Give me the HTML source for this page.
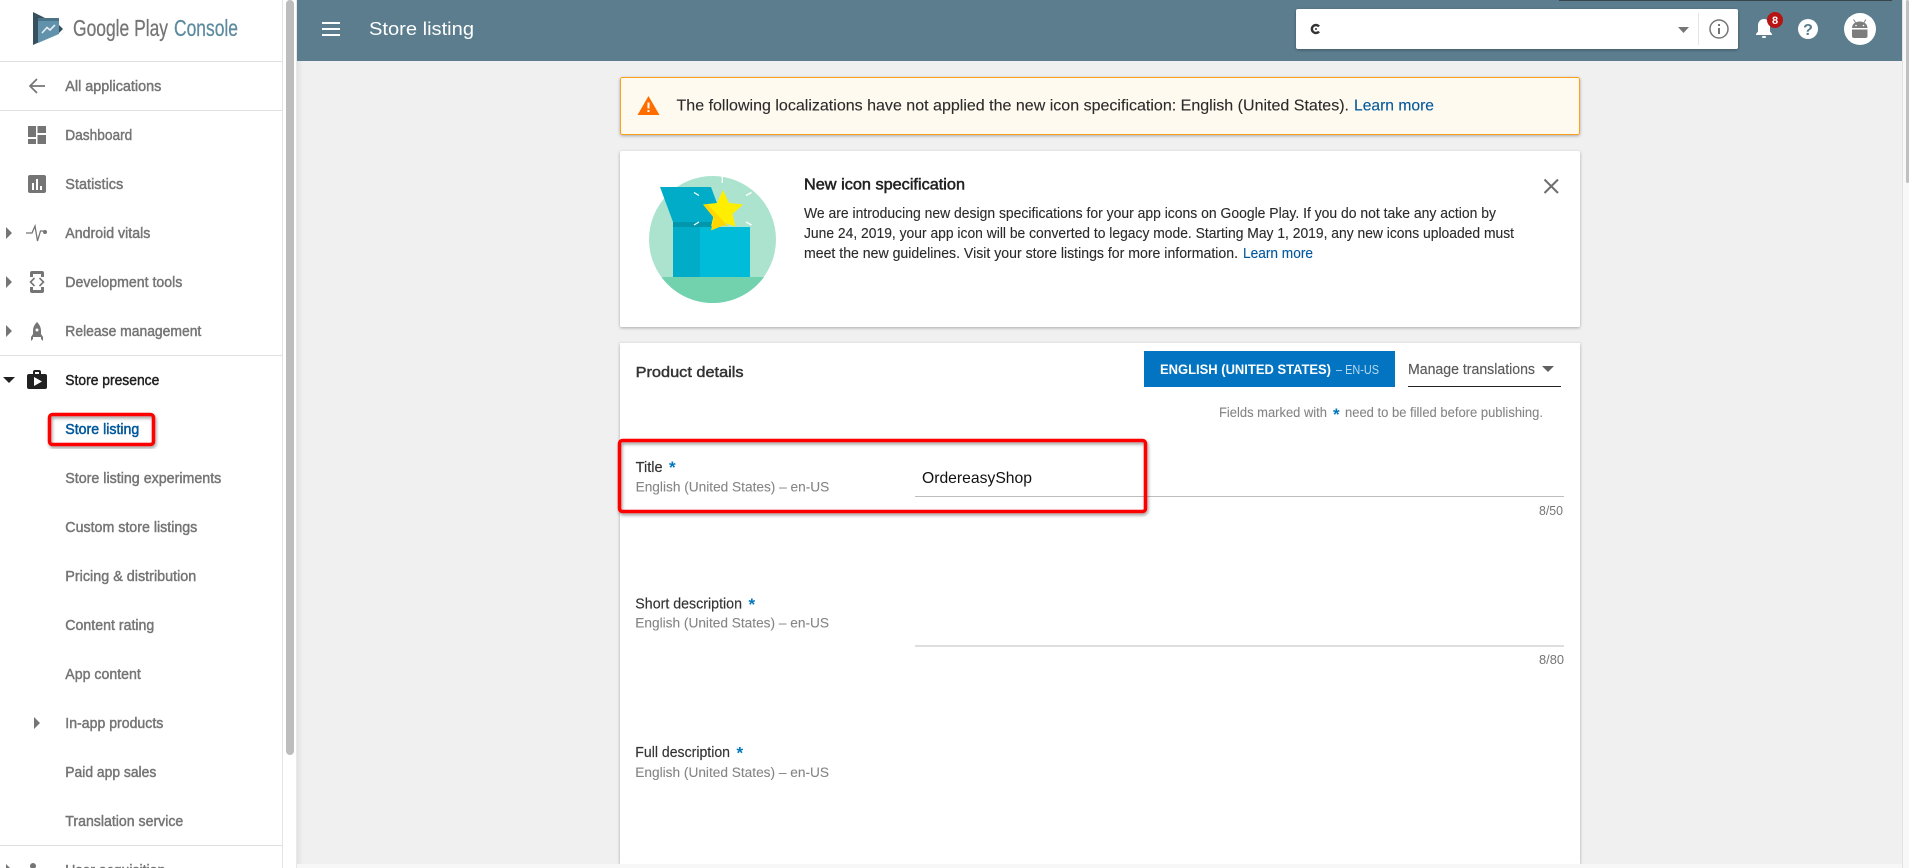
<!DOCTYPE html>
<html lang="en"><head><meta charset="utf-8"><title>Store listing</title>
<style>
html,body{margin:0;padding:0;width:1909px;height:868px;overflow:hidden;background:#f0f0f0}
svg{display:block;position:absolute;left:0;top:0}
text{font-family:"Liberation Sans",sans-serif;white-space:pre}
.n{font-size:14.6px;fill:#757575;stroke:#757575;stroke-width:.45}
.b{font-size:14.6px;fill:#212121;stroke:#212121;stroke-width:.45}
.t{font-size:14.6px;fill:#2b2b2b;stroke:#2b2b2b;stroke-width:.12}
.s{font-size:14.2px;fill:#858585;stroke:#858585;stroke-width:.1}
.l{fill:#01579b}
.i{fill:#757575}
</style></head><body>
<svg width="1909" height="868" viewBox="0 0 1909 868" xmlns="http://www.w3.org/2000/svg">
<defs>
<filter id="sh" x="-5%" y="-5%" width="110%" height="115%"><feDropShadow dx="0" dy="1" stdDeviation="1.500" flood-color="#000" flood-opacity=".3"/></filter>
<filter id="rs" x="-5%" y="-10%" width="110%" height="125%"><feDropShadow dx="1" dy="2" stdDeviation="1.500" flood-color="#000" flood-opacity=".4"/></filter>
<linearGradient id="edge" x1="0" x2="1" y1="0" y2="0"><stop offset="0" stop-color="#e2e2e2"/><stop offset="1" stop-color="#f0f0f0"/></linearGradient>
</defs>

<!-- page background -->
<rect x="297" y="0" width="1605" height="868" fill="#f0f0f0"/>
<rect x="297" y="61" width="6" height="807" fill="url(#edge)"/>

<!-- sidebar -->
<rect x="0" y="0" width="297" height="868" fill="#fff"/>
<rect x="282" y="0" width="1" height="868" fill="#e4e4e4"/>
<rect x="296" y="0" width="1" height="868" fill="#e8e8e8"/>
<rect x="286" y="0" width="8" height="755" rx="4" fill="#bdbdbd"/>
<rect x="0" y="61" width="282" height="1" fill="#e0e0e0"/>
<rect x="0" y="110" width="282" height="1" fill="#e0e0e0"/>
<rect x="0" y="355" width="282" height="1" fill="#e0e0e0"/>
<rect x="0" y="845" width="282" height="1" fill="#e0e0e0"/>

<!-- logo -->
<path d="M33 12 L59 25 L63 29 L59 33 L33 45 Z" fill="#37505e"/>
<path d="M38 18 H59 V34 L38 43 Z" fill="#6292ab"/>
<path d="M38 18 H59 V21 H38 Z" fill="#4c7489"/>
<path d="M42 33 L47 27.500 L50 30 L55 25" fill="none" stroke="#e4edf1" stroke-width="1.600"/>
<text x="73" y="36" font-size="23" fill="#757575" stroke="#757575" stroke-width=".25" textLength="95" lengthAdjust="spacingAndGlyphs">Google Play</text>
<text x="174" y="36" font-size="23" fill="#5c8a9f" stroke="#5c8a9f" stroke-width=".25" textLength="64" lengthAdjust="spacingAndGlyphs">Console</text>

<!-- sidebar text -->
<text class="n" x="65.300" y="91" textLength="96" lengthAdjust="spacingAndGlyphs">All applications</text>
<text class="n" x="65.300" y="140" textLength="67" lengthAdjust="spacingAndGlyphs">Dashboard</text>
<text class="n" x="65.300" y="189" textLength="58" lengthAdjust="spacingAndGlyphs">Statistics</text>
<text class="n" x="65.300" y="238" textLength="85" lengthAdjust="spacingAndGlyphs">Android vitals</text>
<text class="n" x="65.300" y="287" textLength="117" lengthAdjust="spacingAndGlyphs">Development tools</text>
<text class="n" x="65.300" y="336" textLength="136" lengthAdjust="spacingAndGlyphs">Release management</text>
<text class="b" x="65.300" y="385" textLength="94" lengthAdjust="spacingAndGlyphs">Store presence</text>
<text x="65.300" y="434" font-size="14.600" fill="#01579b" stroke="#01579b" stroke-width=".5" textLength="74" lengthAdjust="spacingAndGlyphs">Store listing</text>
<text class="n" x="65.300" y="483" textLength="156" lengthAdjust="spacingAndGlyphs">Store listing experiments</text>
<text class="n" x="65.300" y="532" textLength="132" lengthAdjust="spacingAndGlyphs">Custom store listings</text>
<text class="n" x="65.300" y="581" textLength="131" lengthAdjust="spacingAndGlyphs">Pricing &amp; distribution</text>
<text class="n" x="65.300" y="630" textLength="89" lengthAdjust="spacingAndGlyphs">Content rating</text>
<text class="n" x="65.300" y="679" textLength="75.500" lengthAdjust="spacingAndGlyphs">App content</text>
<text class="n" x="65.300" y="728" textLength="98" lengthAdjust="spacingAndGlyphs">In-app products</text>
<text class="n" x="65.300" y="777" textLength="91" lengthAdjust="spacingAndGlyphs">Paid app sales</text>
<text class="n" x="65.300" y="826" textLength="118" lengthAdjust="spacingAndGlyphs">Translation service</text>
<text class="n" x="65.300" y="875" textLength="100" lengthAdjust="spacingAndGlyphs">User acquisition</text>

<!-- sidebar icons -->
<path d="M45 86H30M37 79l-7 7 7 7" fill="none" stroke="#757575" stroke-width="1.700"/>
<path class="i" d="M28 126h8v11h-8zM37.500 126H46v7h-8.500zM28 139h8v5h-8zM37.500 135H46v9h-8.500z"/>
<rect class="i" x="28" y="175" width="18" height="18" rx="2"/>
<path d="M32 183h2v7h-2zM36 179h2v11h-2zM40 186h2v4h-2z" fill="#fff"/>
<path d="M26 233h6l3-7 2.500 15 3-10h3" fill="none" stroke="#757575" stroke-width="1.300"/>
<circle class="i" cx="45" cy="232" r="2"/>
<path d="M30 277v-4a2 2 0 0 1 2-2h10a2 2 0 0 1 2 2v4h-3v-3H33v3zM30 287v4a2 2 0 0 0 2 2h10a2 2 0 0 0 2-2v-4h-3v3H33v-3z" class="i"/>
<path d="M34.500 278l-4 4 4 4M39.500 278l4 4-4 4" fill="none" stroke="#757575" stroke-width="1.600"/>
<path class="i" d="M37 322c3 3 4 6 4 9v6h-8v-6c0-3 1-6 4-9zM33 334l-2 3v4l2-2zM41 334l2 3v4l-2-2z"/>
<circle cx="37" cy="330" r="1.500" fill="#fff"/>
<path d="M27 376a2 2 0 0 1 2-2h4v-2a2 2 0 0 1 2-2h4a2 2 0 0 1 2 2v2h4a2 2 0 0 1 2 2v11a2 2 0 0 1-2 2H29a2 2 0 0 1-2-2z" fill="#212121"/>
<path d="M35 372h4v2h-4z" fill="#fff"/>
<path d="M34 377l8 4.500-8 4.500z" fill="#fff"/>
<path class="i" d="M6 227l6 6-6 6zM6 276l6 6-6 6zM6 325l6 6-6 6zM34 717l6 6-6 6zM6 864l6 6-6 6z"/>
<path d="M3 377h12l-6 6z" fill="#212121"/>
<circle class="i" cx="33" cy="866" r="3"/>

<!-- red highlight around Store listing -->
<rect x="49.500" y="414.500" width="104" height="30" rx="3" fill="none" stroke="#f00" stroke-width="3.500" filter="url(#rs)"/>

<!-- header -->
<rect x="297" y="0" width="1605" height="61" fill="#5b7d8e"/>
<rect x="1559" y="0" width="333" height="1" fill="#38454c"/>
<path d="M322 22h18v2h-18zM322 28h18v2h-18zM322 34h18v2h-18z" fill="#fff"/>
<text x="369" y="35" font-size="18.500" fill="#fff" textLength="105" lengthAdjust="spacingAndGlyphs">Store listing</text>

<rect x="1296" y="9" width="442" height="40" rx="2" fill="#fff" filter="url(#sh)"/>
<path d="M1319 26.500a4 4 0 1 0 0 5" fill="none" stroke="#333" stroke-width="2.400"/>
<circle cx="1316" cy="29" r="1" fill="#333"/>
<path d="M1678 27h11l-5.500 6z" fill="#757575"/>
<rect x="1698" y="13" width="1" height="32" fill="#e4e4e4"/>
<circle cx="1719" cy="29" r="9" fill="none" stroke="#757575" stroke-width="1.500"/>
<path d="M1718 28h2v6h-2zM1718 24h2v2h-2z" fill="#757575"/>

<path d="M1764 19c-3.500 0-6 2.800-6 6.500v6l-2 2.500v1h16v-1l-2-2.500v-6c0-3.700-2.500-6.500-6-6.500z" fill="#fff"/>
<rect x="1762" y="36" width="4" height="2" rx="1" fill="#fff"/>
<circle cx="1775" cy="20" r="8" fill="#b71414"/>
<text x="1775" y="24" font-size="11" font-weight="bold" fill="#fff" text-anchor="middle">8</text>
<ellipse cx="1808" cy="29" rx="10" ry="10" fill="#fff"/>
<text x="1808" y="35" font-size="16" font-weight="bold" fill="#5b7d8e" text-anchor="middle">?</text>
<circle cx="1860" cy="29" r="16" fill="#fff"/>
<path d="M1852 29.500h15.500v6.500a2 2 0 0 1-2 2h-11.500a2 2 0 0 1-2-2zM1852 28c0-4 3.500-6.500 7.750-6.500s7.750 2.500 7.750 6.500z" fill="#7d7d7d"/>
<path d="M1855.500 22.500l-2-3M1864 22.500l2-3" stroke="#7d7d7d" stroke-width="1"/>
<circle cx="1856" cy="25.500" r=".8" fill="#fff"/><circle cx="1863.500" cy="25.500" r=".8" fill="#fff"/>

<!-- alert -->
<rect x="620.500" y="77.500" width="959" height="57" rx="2" fill="#fffaef" stroke="#ff9f1a" filter="url(#sh)"/>
<path d="M648.500 96L659.500 115H637.500Z" fill="#ff6d00"/>
<path d="M647.500 102.500h2v6h-2zM647.500 110h2v2h-2z" fill="#fff"/>
<text x="676.500" y="110.500" font-size="16" fill="#2b2b2b" stroke="#2b2b2b" stroke-width=".12" textLength="672.500" lengthAdjust="spacingAndGlyphs">The following localizations have not applied the new icon specification: English (United States).</text>
<text x="1354" y="110.500" font-size="16" class="l" stroke="#01579b" stroke-width=".12" textLength="80" lengthAdjust="spacingAndGlyphs">Learn more</text>

<!-- new icon card -->
<rect x="620" y="151" width="960" height="176" rx="2" fill="#fff" filter="url(#sh)"/>
<circle cx="712.500" cy="239.500" r="63.500" fill="#ace3cf"/>
<path d="M661.500 277H764a63.500 63.500 0 0 1-102.500 0z" fill="#72d2ae"/>
<path d="M673 226H700V277H673z" fill="#00acc8"/>
<path d="M673 221H712V227H673z" fill="#0097ad"/>
<path d="M660 187H711L724 222H673z" fill="#00acc8"/>
<path d="M700 227H750V277H700z" fill="#00bcd9"/>
<path d="M723 190l6 13 14 1.500-10.500 9.500 3 12.500-12.500-4-12 4 3-12.500L703 204.500l14-1.500z" fill="#ffee00"/>
<path d="M703 204.500l5 0 20 22-5-1-12 5 3-12.500z" fill="#ffd600"/>
<path d="M722.300 176v7M694 192.500l5 3M746 195.500l5.500-3M694 225l5-3M746 222l5.500 3" stroke="#fff" stroke-width="1.300"/>
<text x="804" y="189.500" font-size="15.600" fill="#212121" stroke="#212121" stroke-width=".5" textLength="161" lengthAdjust="spacingAndGlyphs">New icon specification</text>
<text class="t" x="804" y="218" textLength="692" lengthAdjust="spacingAndGlyphs">We are introducing new design specifications for your app icons on Google Play. If you do not take any action by</text>
<text class="t" x="804" y="238" textLength="710" lengthAdjust="spacingAndGlyphs">June 24, 2019, your app icon will be converted to legacy mode. Starting May 1, 2019, any new icons uploaded must</text>
<text class="t" x="804" y="258" textLength="434" lengthAdjust="spacingAndGlyphs">meet the new guidelines. Visit your store listings for more information.</text>
<text x="1243" y="258" font-size="14.600" class="l" stroke="#01579b" stroke-width=".12" textLength="70" lengthAdjust="spacingAndGlyphs">Learn more</text>
<path d="M1544.500 179.500l13.500 13.500M1558 179.500l-13.500 13.500" stroke="#6e6e6e" stroke-width="2"/>

<!-- product details card -->
<rect x="620" y="343" width="960" height="521" fill="#fff" filter="url(#sh)"/>
<rect x="297" y="864" width="1605" height="4" fill="#f7f7f7"/>
<text x="635.600" y="377" font-size="15" fill="#333" stroke="#333" stroke-width=".45" textLength="108" lengthAdjust="spacingAndGlyphs">Product details</text>

<rect x="1144" y="351" width="251" height="36" fill="#0274c2"/>
<text x="1160" y="374" font-size="13.500" font-weight="bold" fill="#fff" textLength="171" lengthAdjust="spacingAndGlyphs">ENGLISH (UNITED STATES)</text>
<text x="1336" y="374" font-size="12.500" fill="#b8d9f0" textLength="43" lengthAdjust="spacingAndGlyphs">– EN-US</text>
<text x="1408" y="374" font-size="14.600" fill="#5a5a5a" stroke="#5a5a5a" stroke-width=".15" textLength="127" lengthAdjust="spacingAndGlyphs">Manage translations</text>
<path d="M1542 366h12l-6 6z" fill="#616161"/>
<rect x="1408" y="386" width="153" height="1" fill="#212121"/>
<text class="s" x="1219" y="417" textLength="108" lengthAdjust="spacingAndGlyphs">Fields marked with</text>
<text x="1333" y="420" font-size="17" font-weight="bold" fill="#0277bd">*</text>
<text class="s" x="1345" y="417" textLength="198" lengthAdjust="spacingAndGlyphs">need to be filled before publishing.</text>

<text x="635.600" y="472" font-size="14.600" fill="#333" stroke="#333" stroke-width=".15" textLength="27" lengthAdjust="spacingAndGlyphs">Title</text>
<text x="669" y="473" font-size="17" font-weight="bold" fill="#0277bd">*</text>
<text class="s" x="635.600" y="491.500" textLength="193.700" lengthAdjust="spacingAndGlyphs">English (United States) – en-US</text>
<text x="922" y="483" font-size="16" fill="#111" textLength="110" lengthAdjust="spacingAndGlyphs">OrdereasyShop</text>
<rect x="915" y="496" width="649" height="1" fill="#bdbdbd"/>
<text x="1539" y="515" font-size="13" fill="#757575" textLength="24" lengthAdjust="spacingAndGlyphs">8/50</text>

<text x="635.300" y="608.500" font-size="14.600" fill="#333" stroke="#333" stroke-width=".15" textLength="106.700" lengthAdjust="spacingAndGlyphs">Short description</text>
<text x="748.500" y="610" font-size="17" font-weight="bold" fill="#0277bd">*</text>
<text class="s" x="635.300" y="627.500" textLength="193.700" lengthAdjust="spacingAndGlyphs">English (United States) – en-US</text>
<rect x="915" y="645.500" width="649" height="1" fill="#bdbdbd"/>
<text x="1539" y="664" font-size="13" fill="#757575" textLength="25" lengthAdjust="spacingAndGlyphs">8/80</text>

<text x="635.300" y="757" font-size="14.600" fill="#333" stroke="#333" stroke-width=".15" textLength="94.700" lengthAdjust="spacingAndGlyphs">Full description</text>
<text x="736.500" y="758.500" font-size="17" font-weight="bold" fill="#0277bd">*</text>
<text class="s" x="635.300" y="777" textLength="193.700" lengthAdjust="spacingAndGlyphs">English (United States) – en-US</text>

<!-- red highlight around Title -->
<rect x="619.500" y="440.500" width="526" height="71" rx="3" fill="none" stroke="#f00" stroke-width="3.500" filter="url(#rs)"/>

<!-- page scrollbar -->
<rect x="1902" y="0" width="7" height="868" fill="#f8f8f8"/>
<rect x="1902" y="0" width="1" height="868" fill="#e2e2e2"/>
<rect x="1906" y="0" width="3" height="183" rx="1.500" fill="#c0c0c0"/>
</svg>
</body></html>
